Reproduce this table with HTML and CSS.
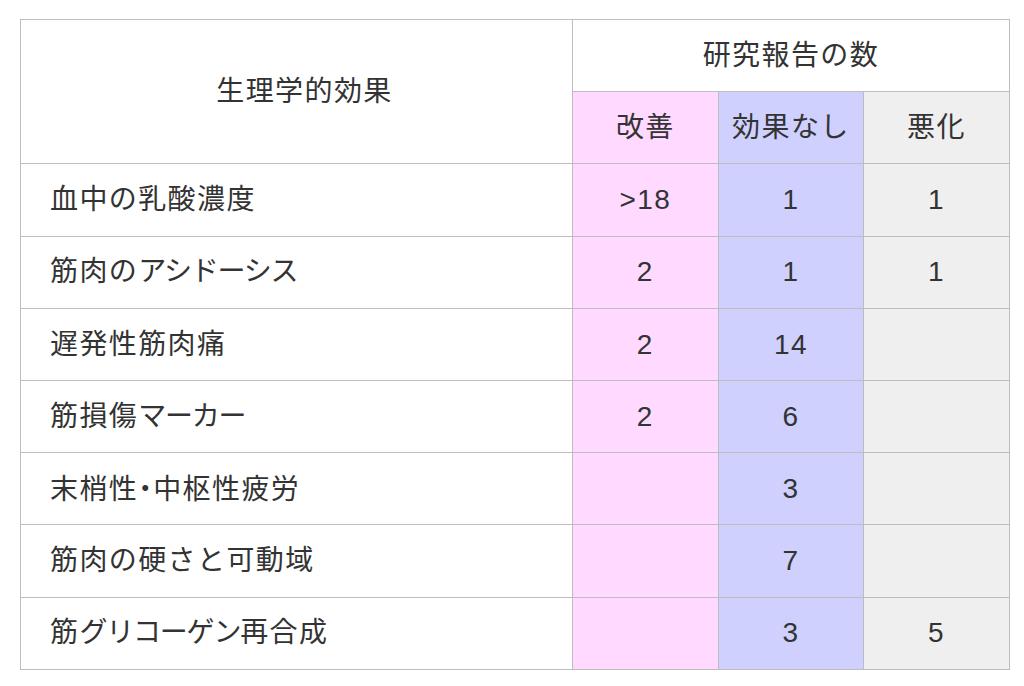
FILE: index.html
```html
<!DOCTYPE html>
<html lang="ja">
<head>
<meta charset="utf-8">
<title>生理学的効果</title>
<link rel="stylesheet" href="styles.css">
</head>
<body>
<table class="effects">
  <colgroup>
    <col class="c-name">
    <col class="c-num">
    <col class="c-num">
    <col class="c-num">
  </colgroup>
  <thead>
    <tr>
      <th rowspan="2" class="name-head">生理学的効果</th>
      <th colspan="3" class="group-head">研究報告の数</th>
    </tr>
    <tr>
      <th class="good">改善</th>
      <th class="none">効果なし</th>
      <th class="bad">悪化</th>
    </tr>
  </thead>
  <tbody>
    <tr><td class="name">血中の乳酸濃度</td><td class="good">&gt;18</td><td class="none">1</td><td class="bad">1</td></tr>
    <tr><td class="name">筋肉の<span class="kana">アシドーシス</span></td><td class="good">2</td><td class="none">1</td><td class="bad">1</td></tr>
    <tr><td class="name">遅発性筋肉痛</td><td class="good">2</td><td class="none">14</td><td class="bad"></td></tr>
    <tr><td class="name">筋損傷<span class="kana">マーカー</span></td><td class="good">2</td><td class="none">6</td><td class="bad"></td></tr>
    <tr><td class="name">末梢性<span class="dot">・</span>中枢性疲労</td><td class="good"></td><td class="none">3</td><td class="bad"></td></tr>
    <tr><td class="name">筋肉の硬さと可動域</td><td class="good"></td><td class="none">7</td><td class="bad"></td></tr>
    <tr><td class="name">筋<span class="kana">グリコーゲン</span>再合成</td><td class="good"></td><td class="none">3</td><td class="bad">5</td></tr>
  </tbody>
</table>
</body>
</html>
```
FILE: styles.css
```css
html, body {
  margin: 0;
  padding: 0;
  background: #ffffff;
}

body {
  padding: 19px 0 0 20px;
  font-family: "Liberation Sans", "Noto Sans CJK JP", sans-serif;
  color: #333333;
}

.effects {
  border-collapse: collapse;
  table-layout: fixed;
  width: 989px;
  font-size: 28px;
  letter-spacing: 1.4px;
}

.c-name { width: 552px; }
.c-num { width: 145.6px; }

.effects th,
.effects td {
  border: 1px solid #bdbdbd;
  height: 71.2px;
  padding: 0;
  text-align: center;
  vertical-align: middle;
  font-weight: normal;
  line-height: 1.2;
}

.effects th.name-head {
  padding-left: 16px;
}

.effects td.name {
  text-align: left;
  padding-left: 29px;
}

.kana {
  letter-spacing: -1.2px;
}

.dot {
  font-family: "Noto Sans CJK JP", sans-serif;
  font-feature-settings: "palt";
  letter-spacing: 1px;
}

.good { background: #ffd9ff; }
.none { background: #d0d0ff; }
.bad { background: #efefef; }
```
